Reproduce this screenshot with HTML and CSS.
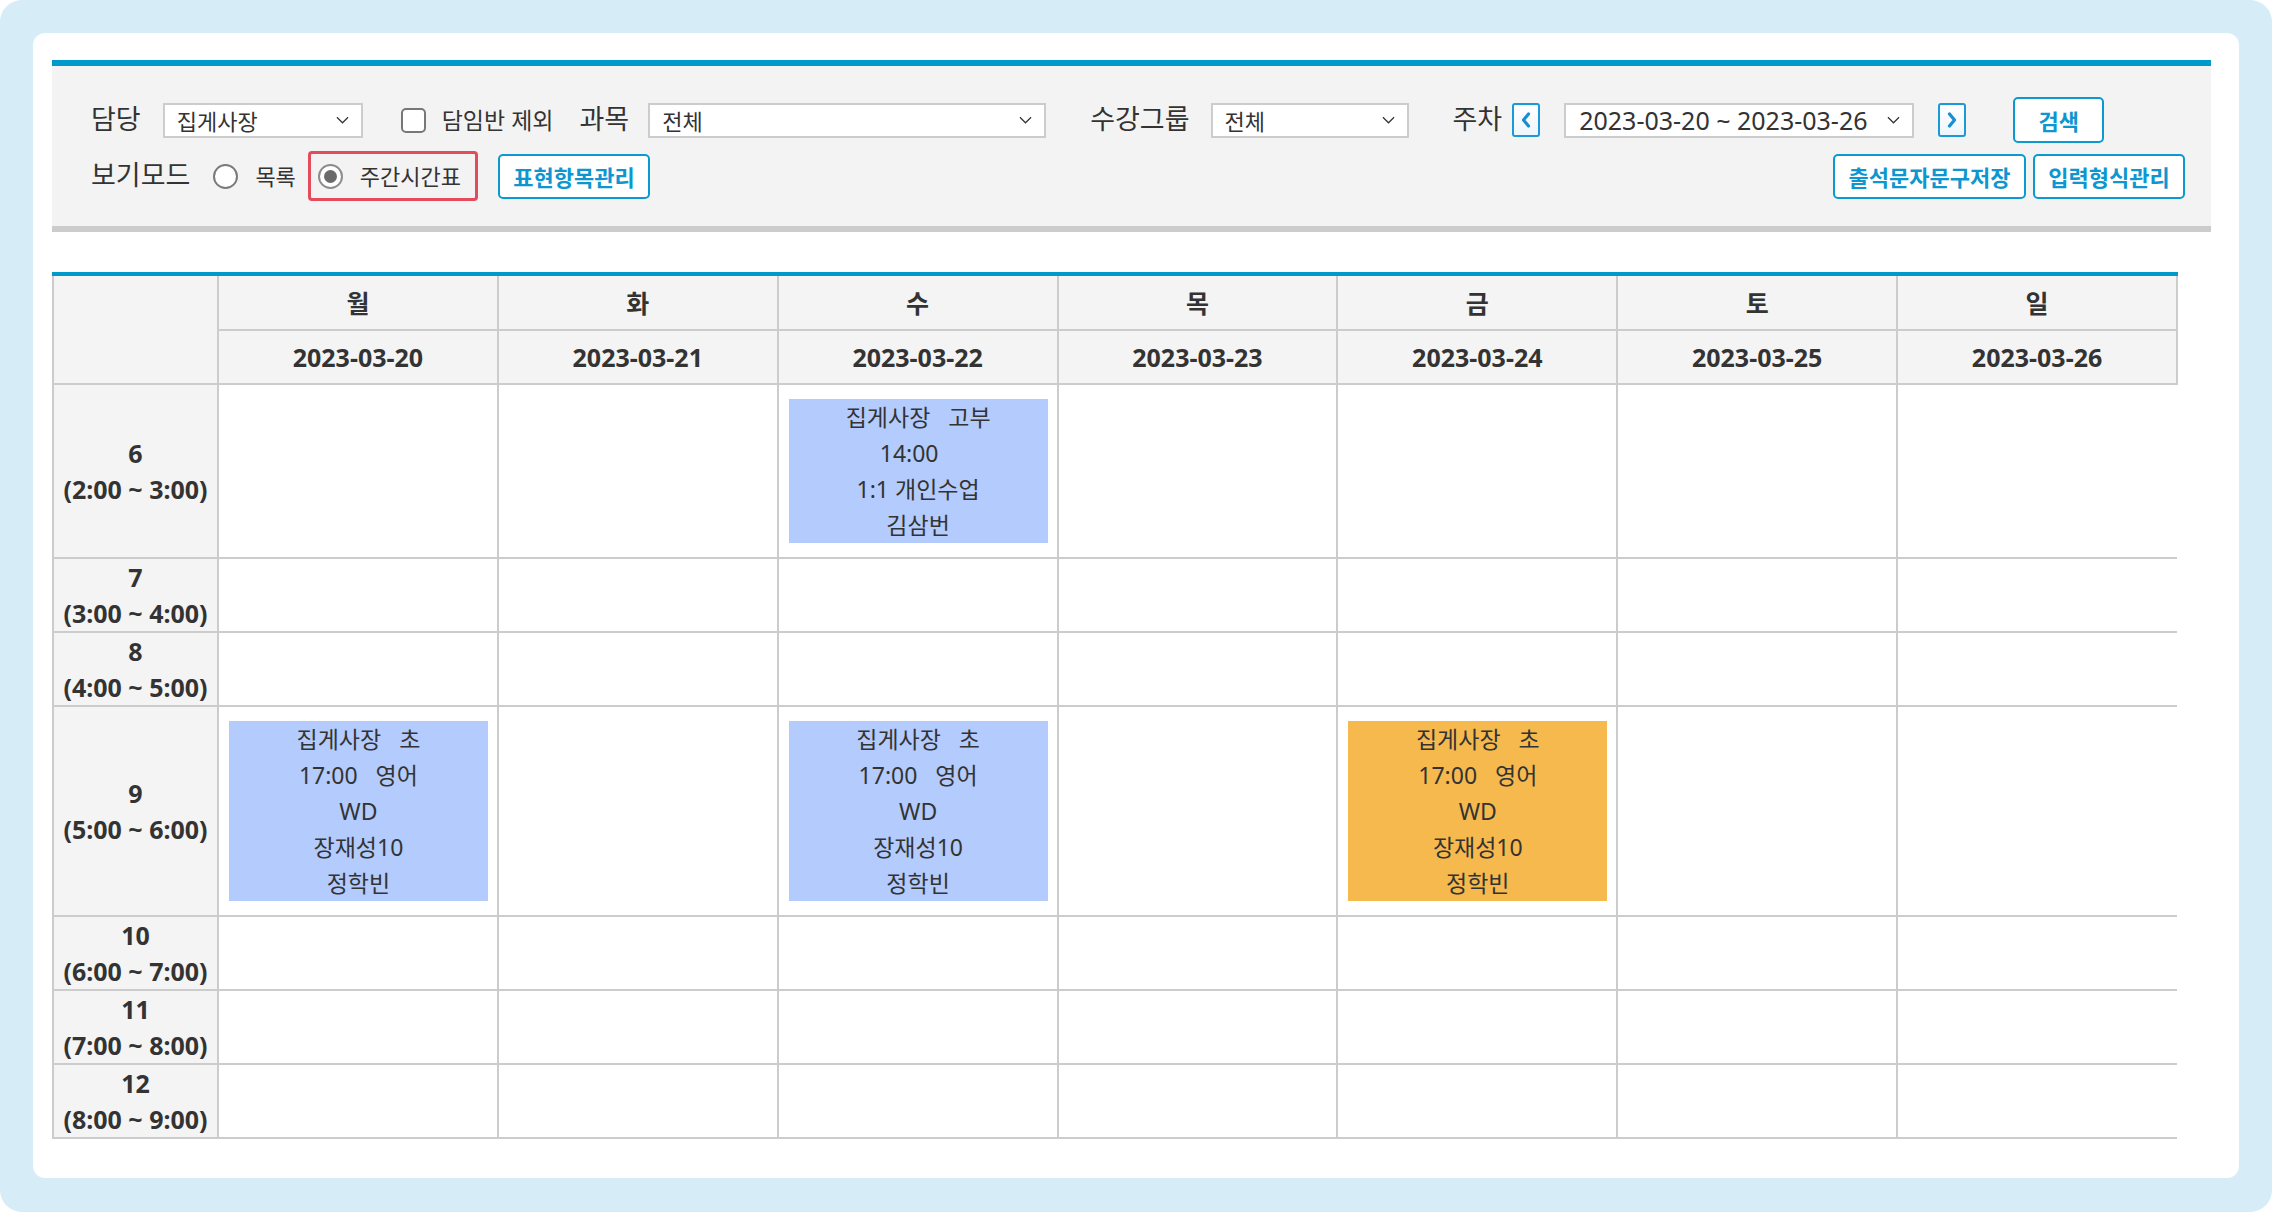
FILE: index.html
```html
<!DOCTYPE html>
<html lang="ko">
<head>
<meta charset="utf-8">
<title>주간시간표</title>
<link rel="stylesheet" href="styles.css">
</head>
<body>
<div class="frame">
  <div class="card">
    <div class="search">
      <div class="row row1">
        <span class="lbl">담당</span>
        <div class="sel sel-teacher ml22"><span>집게사장</span><svg class="chev" viewBox="0 0 14 8"><polyline points="1,1 7,7 13,1"/></svg></div>
        <span class="chk ml38"></span>
        <span class="txt txt-chk ml16">담임반 제외</span>
        <span class="lbl ml26">과목</span>
        <div class="sel sel-subject ml19"><span>전체</span><svg class="chev" viewBox="0 0 14 8"><polyline points="1,1 7,7 13,1"/></svg></div>
        <span class="lbl ml44">수강그룹</span>
        <div class="sel sel-group ml21"><span>전체</span><svg class="chev" viewBox="0 0 14 8"><polyline points="1,1 7,7 13,1"/></svg></div>
        <span class="lbl ml44">주차</span>
        <button class="nav ml10" type="button"><svg viewBox="0 0 10 16"><polyline points="7.5,2 2.5,8 7.5,14"/></svg></button>
        <div class="sel sel-week ml24"><span>2023-03-20 ~ 2023-03-26</span><svg class="chev" viewBox="0 0 14 8"><polyline points="1,1 7,7 13,1"/></svg></div>
        <button class="nav ml24" type="button"><svg viewBox="0 0 10 16"><polyline points="2.5,2 7.5,8 2.5,14"/></svg></button>
        <button class="btn btn-search ml47" type="button">검색</button>
      </div>
      <div class="row row2">
        <span class="lbl">보기모드</span>
        <span class="radio ml23"></span>
        <span class="txt ml17">목록</span>
        <div class="mode-box ml12">
          <span class="radio on"></span>
          <span class="txt ml17">주간시간표</span>
        </div>
        <button class="btn btn-expr ml20" type="button">표현항목관리</button>
        <button class="btn btn-sms mlauto" type="button">출석문자문구저장</button>
        <button class="btn btn-form ml7" type="button">입력형식관리</button>
      </div>
    </div>

    <div class="tt-wrap">
      <table class="tt">
        <colgroup>
          <col class="c-time">
          <col><col><col><col><col><col><col>
        </colgroup>
        <thead>
          <tr class="h1">
            <th rowspan="2" class="corner"></th>
            <th>월</th><th>화</th><th>수</th><th>목</th><th>금</th><th>토</th><th>일</th>
          </tr>
          <tr class="h2">
            <th>2023-03-20</th><th>2023-03-21</th><th>2023-03-22</th><th>2023-03-23</th><th>2023-03-24</th><th>2023-03-25</th><th>2023-03-26</th>
          </tr>
        </thead>
        <tbody>
          <tr>
            <th class="time">6<br>(2:00 ~ 3:00)</th>
            <td></td><td></td>
            <td class="ev-cell"><div class="ev blue">집게사장&nbsp;&nbsp;&nbsp;고부<br>14:00&nbsp;&nbsp;&nbsp;<br>1:1 개인수업<br>김삼번</div></td>
            <td></td><td></td><td></td><td></td>
          </tr>
          <tr>
            <th class="time">7<br>(3:00 ~ 4:00)</th>
            <td></td><td></td><td></td><td></td><td></td><td></td><td></td>
          </tr>
          <tr>
            <th class="time">8<br>(4:00 ~ 5:00)</th>
            <td></td><td></td><td></td><td></td><td></td><td></td><td></td>
          </tr>
          <tr>
            <th class="time">9<br>(5:00 ~ 6:00)</th>
            <td class="ev-cell"><div class="ev blue">집게사장&nbsp;&nbsp;&nbsp;초<br>17:00&nbsp;&nbsp;&nbsp;영어<br>WD<br>장재성10<br>정학빈</div></td>
            <td></td>
            <td class="ev-cell"><div class="ev blue">집게사장&nbsp;&nbsp;&nbsp;초<br>17:00&nbsp;&nbsp;&nbsp;영어<br>WD<br>장재성10<br>정학빈</div></td>
            <td></td>
            <td class="ev-cell"><div class="ev orange">집게사장&nbsp;&nbsp;&nbsp;초<br>17:00&nbsp;&nbsp;&nbsp;영어<br>WD<br>장재성10<br>정학빈</div></td>
            <td></td><td></td>
          </tr>
          <tr>
            <th class="time">10<br>(6:00 ~ 7:00)</th>
            <td></td><td></td><td></td><td></td><td></td><td></td><td></td>
          </tr>
          <tr>
            <th class="time">11<br>(7:00 ~ 8:00)</th>
            <td></td><td></td><td></td><td></td><td></td><td></td><td></td>
          </tr>
          <tr>
            <th class="time">12<br>(8:00 ~ 9:00)</th>
            <td></td><td></td><td></td><td></td><td></td><td></td><td></td>
          </tr>
        </tbody>
      </table>
    </div>
  </div>
</div>
</body>
</html>
```
FILE: styles.css
```css
* { box-sizing: border-box; }

html, body {
  margin: 0;
  padding: 0;
  background: #ffffff;
}

body {
  font-family: "Noto Sans", "Noto Sans CJK KR", sans-serif;
  color: #333333;
}

.frame {
  width: 2272px;
  height: 1212px;
  background: #d6ecf6;
  border-radius: 22px;
  padding: 33px 33px 34px 33px;
}

.card {
  height: 100%;
  background: #ffffff;
  border-radius: 12px;
  padding: 27px 28px 0 19px;
}

/* search panel */
.search {
  background: #f3f3f3;
  border-top: 6px solid #0099cc;
  border-bottom: 6px solid #cccccc;
  padding: 31px 26px 25px 39px;
  display: flex;
  flex-direction: column;
  gap: 8px;
}

.row {
  display: flex;
  align-items: center;
}
.row1 { height: 46px; }
.row2 { height: 50px; }

.lbl {
  font-size: 27px;
  color: #333;
  white-space: nowrap;
  line-height: 1;
  position: relative;
  top: -2px;
}

.txt {
  font-size: 22px;
  color: #333;
  white-space: nowrap;
  line-height: 1;
}
.txt-chk { font-size: 23px; }

.ml7 { margin-left: 7px; }
.ml10 { margin-left: 10px; }
.ml12 { margin-left: 12px; }
.ml16 { margin-left: 16px; }
.ml17 { margin-left: 17px; }
.ml19 { margin-left: 19px; }
.ml20 { margin-left: 20px; }
.ml21 { margin-left: 21px; }
.ml22 { margin-left: 22px; }
.ml23 { margin-left: 23px; }
.ml24 { margin-left: 24px; }
.ml26 { margin-left: 26px; }
.ml38 { margin-left: 38px; }
.ml44 { margin-left: 44px; }
.ml47 { margin-left: 47px; }
.mlauto { margin-left: auto; }

.sel {
  height: 35px;
  background: #ffffff;
  border: 2px solid #cccccc;
  display: flex;
  align-items: center;
  justify-content: space-between;
  padding: 0 12px 0 12px;
  font-size: 22px;
  color: #333;
  white-space: nowrap;
}
.sel-teacher { width: 200px; }
.sel-subject { width: 398px; }
.sel-group { width: 198px; }
.sel-week { width: 350px; font-size: 25px; padding-left: 13px; }

.chev {
  width: 13px;
  height: 8px;
  flex: none;
}
.chev polyline {
  fill: none;
  stroke: #333;
  stroke-width: 1.3;
}

.chk {
  width: 25px;
  height: 25px;
  border: 2px solid #777777;
  border-radius: 5px;
  background: #ffffff;
  flex: none;
}

.radio {
  width: 25px;
  height: 25px;
  border: 2px solid #7a7a7a;
  border-radius: 50%;
  background: #ffffff;
  flex: none;
  position: relative;
}
.radio.on {
  border-color: #8c8c8c;
}
.radio.on::after {
  content: "";
  position: absolute;
  left: 4px;
  top: 4px;
  width: 13px;
  height: 13px;
  border-radius: 50%;
  background: #6b6b6b;
}

.mode-box {
  display: flex;
  align-items: center;
  height: 50px;
  border: 3px solid #e44c5c;
  border-radius: 4px;
  padding: 0 14px 0 7px;
}

.nav {
  width: 28px;
  height: 34px;
  padding: 0;
  border: 2px solid #1a9ad6;
  border-radius: 3px;
  background: linear-gradient(#ffffff, #eef6fb);
  display: flex;
  align-items: center;
  justify-content: center;
  flex: none;
}
.nav svg {
  width: 10px;
  height: 16px;
}
.nav polyline {
  fill: none;
  stroke: #1a8fd0;
  stroke-width: 3.2;
  stroke-linecap: round;
  stroke-linejoin: round;
}

.btn {
  height: 45px;
  background: #ffffff;
  border: 2px solid #0a9ad2;
  border-radius: 5px;
  color: #0d96cf;
  font-family: "Noto Sans CJK KR", sans-serif;
  font-size: 22px;
  font-weight: 700;
  padding: 0;
  flex: none;
  white-space: nowrap;
}
.btn-search { width: 91px; height: 46px; }
.btn-expr { width: 152px; }
.btn-sms { width: 193px; }
.btn-form { width: 152px; }

/* timetable */
.tt-wrap {
  margin-top: 40px;
  width: 2126px;
  border-top: 4px solid #0099cc;
}

.tt {
  width: 2126px;
  border-collapse: collapse;
  table-layout: fixed;
}
.c-time { width: 165px; }

.tt th,
.tt td {
  border: 2px solid #cccccc;
  padding: 0;
}

.tt thead th {
  background: #f4f4f4;
  font-size: 25px;
  font-weight: 700;
  line-height: 36px;
  text-align: center;
  color: #333;
}
.tt thead tr.h1 th { height: 54px; border-top: none; }
.tt thead tr.h2 th { height: 54px; }

.tt tbody th.time {
  background: #f4f4f4;
  font-size: 25px;
  font-weight: 700;
  line-height: 36px;
  text-align: center;
  color: #333;
  height: 74px;
}

.tt tbody td:last-child { border-right: none; }

.tt td.ev-cell {
  padding: 14px 9px 14px 10px;
  vertical-align: top;
}

.ev {
  font-size: 23px;
  line-height: 36px;
  text-align: center;
  color: #333;
  white-space: nowrap;
}
.ev.blue { background: #b3cbfd; }
.ev.orange { background: #f5b94e; }
```
